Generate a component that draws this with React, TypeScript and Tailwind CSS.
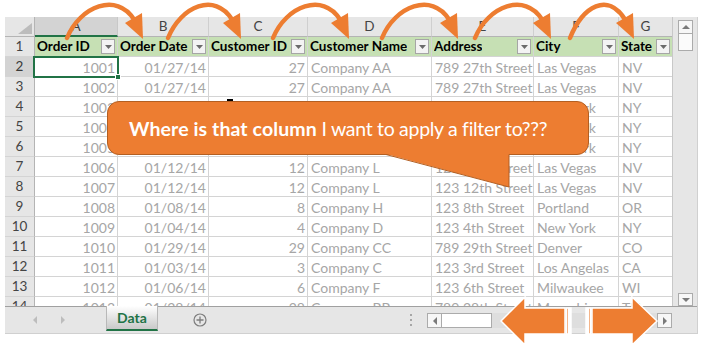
import React from "react";

const letters = ["A", "B", "C", "D", "E", "F", "G"];
const headers = ["Order ID", "Order Date", "Customer ID", "Customer Name", "Address", "City", "State"];
const numeric = [true, true, true, false, false, false, false];

const rows: string[][] = [
  ["1001", "01/27/14", "27", "Company AA", "789 27th Street", "Las Vegas", "NV"],
  ["1002", "01/27/14", "27", "Company AA", "789 27th Street", "Las Vegas", "NV"],
  ["1003", "01/15/14", "15", "Company O", "123 15th Street", "New York", "NY"],
  ["1004", "01/15/14", "15", "Company O", "123 15th Street", "New York", "NY"],
  ["1005", "01/15/14", "15", "Company O", "123 15th Street", "New York", "NY"],
  ["1006", "01/12/14", "12", "Company L", "123 12th Street", "Las Vegas", "NV"],
  ["1007", "01/12/14", "12", "Company L", "123 12th Street", "Las Vegas", "NV"],
  ["1008", "01/08/14", "8", "Company H", "123 8th Street", "Portland", "OR"],
  ["1009", "01/04/14", "4", "Company D", "123 4th Street", "New York", "NY"],
  ["1010", "01/29/14", "29", "Company CC", "789 29th Street", "Denver", "CO"],
  ["1011", "01/03/14", "3", "Company C", "123 3rd Street", "Los Angelas", "CA"],
  ["1012", "01/06/14", "6", "Company F", "123 6th Street", "Milwaukee", "WI"],
  ["1013", "01/28/14", "28", "Company BB", "789 28th Street", "Memphis", "TN"],
];

// start x of each hop arrow and the x of its tip
const hops = [
  [67, 143],
  [168, 241],
  [273, 349],
  [382, 458],
  [475, 551],
  [570, 634],
];

function FilterButton() {
  return (
    <span className="flex h-[15px] w-[14px] shrink-0 items-center justify-center border border-[#a6a6a6] bg-[#f3f3f3]">
      <svg width="7" height="4" viewBox="0 0 7 4">
        <path d="M0 0h7L3.5 4z" fill="#6b6b6b" />
      </svg>
    </span>
  );
}

function Arrow({ dir, color = "#bdbdbd" }: { dir: "left" | "right" | "up" | "down"; color?: string }) {
  const d = {
    left: "M4 0v8L0 4z",
    right: "M0 0v8l4-4z",
    up: "M0 4h8L4 0z",
    down: "M0 0h8L4 4z",
  }[dir];
  const horiz = dir === "left" || dir === "right";
  return (
    <svg width={horiz ? 4 : 8} height={horiz ? 8 : 4} viewBox={horiz ? "0 0 4 8" : "0 0 8 4"}>
      <path d={d} fill={color} />
    </svg>
  );
}

export default function App() {
  return (
    <div className="relative h-[351px] w-[703px] overflow-hidden bg-white pl-[5px] pt-[17px] font-['Lato',sans-serif] text-[13.5px] leading-none">
      {/* Excel window */}
      <div className="flex h-[317px] w-[693px] flex-col border-b border-r border-[#d0d0d0] bg-[#e6e6e6]">
        <div className="flex h-[289px]">
          <div className="h-full w-[668px] overflow-hidden">
            <div className="grid auto-rows-[20px] grid-cols-[30px_83px_91px_99px_124px_102px_85px_54px] bg-white">
              {/* corner */}
              <div className="relative border-b border-r border-[#b4b4b4] bg-[#e6e6e6]">
                <svg className="absolute left-0 top-0" width="30" height="20" viewBox="0 0 30 20">
                  <path d="M27 6v11H13z" fill="#bcbcbc" />
                </svg>
              </div>
              {letters.map((l, i) => (
                <div
                  key={l}
                  className={
                    i === 0
                      ? "flex items-center justify-center border-b-2 border-r border-b-[#217346] border-r-[#c8c8c8] bg-[#d3d3d3] pt-[2px] text-[#3a3a3a]"
                      : "flex items-center justify-center border-b border-r border-b-[#b4b4b4] border-r-[#cfcfcf] bg-[#e6e6e6] text-[#444]"
                  }
                >
                  {l}
                </div>
              ))}

              {/* header row */}
              <div className="flex items-center justify-center border-b border-r border-b-[#d4d4d4] border-r-[#b4b4b4] bg-[#e6e6e6] pt-[1px] text-[#444]">
                1
              </div>
              {headers.map((h) => (
                <div
                  key={h}
                  className="flex items-center justify-between gap-[2px] border-b border-r border-[#d4d4d4] bg-[#c6e0b4] pl-[2px] pr-[2px] font-bold text-black"
                >
                  <span className="overflow-hidden whitespace-nowrap pt-[1px]">{h}</span>
                  <FilterButton />
                </div>
              ))}

              {/* data rows */}
              {rows.map((r, ri) => (
                <React.Fragment key={ri}>
                  <div
                    className={
                      ri === 0
                        ? "flex items-center justify-center border-b border-r border-b-[#d4d4d4] border-r-[#b4b4b4] bg-[#d3d3d3] pt-[1px] text-[#3a3a3a]"
                        : "flex items-center justify-center border-b border-r border-b-[#d4d4d4] border-r-[#b4b4b4] bg-[#e6e6e6] pt-[1px] text-[#444]"
                    }
                  >
                    {ri + 2}
                  </div>
                  {r.map((v, ci) => (
                    <div
                      key={ci}
                      className={
                        numeric[ci]
                          ? "flex items-center justify-end overflow-hidden whitespace-nowrap border-b border-r border-[#d4d4d4] pr-[2px] pt-[3px] text-[14px] text-[#a6a6a6]"
                          : "flex items-center overflow-hidden whitespace-nowrap border-b border-r border-[#d4d4d4] pl-[3px] pt-[3px] text-[14px] text-[#a6a6a6]"
                      }
                    >
                      {v}
                    </div>
                  ))}
                </React.Fragment>
              ))}
            </div>
          </div>

          {/* vertical scrollbar */}
          <div className="flex w-[25px] flex-col border-l border-[#c8c8c8] pl-[5px] pr-[4px] pt-[3px]">
            <div className="flex h-[14px] items-center justify-center border border-[#ababab] bg-[#f7f7f7]">
              <Arrow dir="up" color="#7a7a7a" />
            </div>
            <div className="h-[17px] border-x border-b border-[#ababab] bg-[#fbfbfb]" />
            <div className="flex-1 bg-[#e6e6e6]" />
            <div className="flex h-[13px] items-center justify-center border border-[#ababab] bg-[#f7f7f7]">
              <Arrow dir="down" color="#7a7a7a" />
            </div>
          </div>
        </div>

        {/* sheet tabs bar */}
        <div className="flex h-[28px] items-start border-t border-[#a0a0a0] bg-[#e6e6e6]">
          <div className="flex h-[26px] items-center gap-[24px] pl-[28px]">
            <Arrow dir="left" />
            <Arrow dir="right" />
          </div>
          <div className="-mt-px ml-[41px] flex h-[25px] w-[52px] items-center justify-center border-b-2 border-x border-b-[#217346] border-x-[#b8b8b8] bg-gradient-to-b from-[#ffffff] to-[#c9c9c9] text-[14px] font-bold text-[#217346]">
            Data
          </div>
          <div className="ml-[35px] mt-[6px] flex h-[14px] w-[14px] items-center justify-center">
            <svg width="14" height="14" viewBox="0 0 14 14">
              <circle cx="7" cy="7" r="6" fill="none" stroke="#7d7d7d" strokeWidth="1.2" />
              <path d="M7 3.5v7M3.5 7h7" stroke="#7d7d7d" strokeWidth="1.3" />
            </svg>
          </div>
          <div className="ml-[203px] mt-[7px] flex flex-col gap-[3px]">
            <span className="h-[2px] w-[2px] bg-[#a6a6a6]" />
            <span className="h-[2px] w-[2px] bg-[#a6a6a6]" />
            <span className="h-[2px] w-[2px] bg-[#a6a6a6]" />
          </div>
          <div className="ml-[15px] mt-[6px] flex h-[15px] w-[245px]">
            <div className="flex w-[15px] items-center justify-center border border-[#ababab] bg-[#f7f7f7]">
              <Arrow dir="left" color="#7a7a7a" />
            </div>
            <div className="w-[50px] border-y border-r border-[#ababab] bg-white" />
            <div className="flex-1 bg-[#dedede]" />
            <div className="flex w-[15px] items-center justify-center border border-[#ababab] bg-[#f7f7f7]">
              <Arrow dir="right" color="#7a7a7a" />
            </div>
          </div>
        </div>
      </div>

      {/* active cell A2 */}
      <div className="absolute left-[33px] top-[56px] h-[22px] w-[86px] border-2 border-[#217346]" />
      <div className="absolute left-[115px] top-[74px] h-[6px] w-[6px] border border-white bg-[#217346]" />
      <div className="absolute left-[227px] top-[99px] h-[2px] w-[6px] bg-black" />

      {/* callout */}
      <div className="absolute left-[107px] top-[101px] flex h-[54px] w-[482px] items-center rounded-[12px] border border-[#b35f22] bg-[#ed7d31] pl-[21px] pt-[1px] text-[19.5px] text-white">
        <span className="whitespace-pre">
          <span className="font-bold tracking-[0.1px]">Where is that column</span>
          <span className="tracking-[-0.3px]"> I want to apply a filter to???</span>
        </span>
      </div>

      <svg className="pointer-events-none absolute left-0 top-0" width="703" height="351" viewBox="0 0 703 351">
        {/* callout tail */}
        <path d="M386 154 L509 187 L509 154 Z" fill="#ed7d31" />
        <path d="M386 154.5 L509 187 L509 154.5" fill="none" stroke="#b35f22" strokeWidth="1" />

        {/* column hop arrows */}
        {hops.map(([sx, tx]) => (
          <g key={sx}>
            <path
              d={`M${sx} 38 C${sx + 13} 6 ${tx - 26} -8 ${tx - 9} 19.5`}
              fill="none"
              stroke="#ed7d31"
              strokeWidth="4.5"
              strokeLinecap="round"
            />
            <path d={`M${tx} 39 L${tx - 18} 23 L${tx - 1} 13 Z`} fill="#ed7d31" />
          </g>
        ))}

        {/* striped double arrow */}
        <g fill="#ed7d31" stroke="#ffffff" strokeWidth="1.5" strokeLinejoin="miter">
          <path d="M501 321 L525 297 L525 308 L565 308 L565 334 L525 334 L525 345 Z" />
          <rect x="566.5" y="308" width="2" height="26" />
          <rect x="569.5" y="308" width="1.5" height="26" />
          <rect x="586" y="308" width="1.5" height="26" />
          <rect x="588.5" y="308" width="2" height="26" />
          <path d="M657 321 L632 297 L632 308 L592 308 L592 334 L632 334 L632 345 Z" />
        </g>
      </svg>
    </div>
  );
}
